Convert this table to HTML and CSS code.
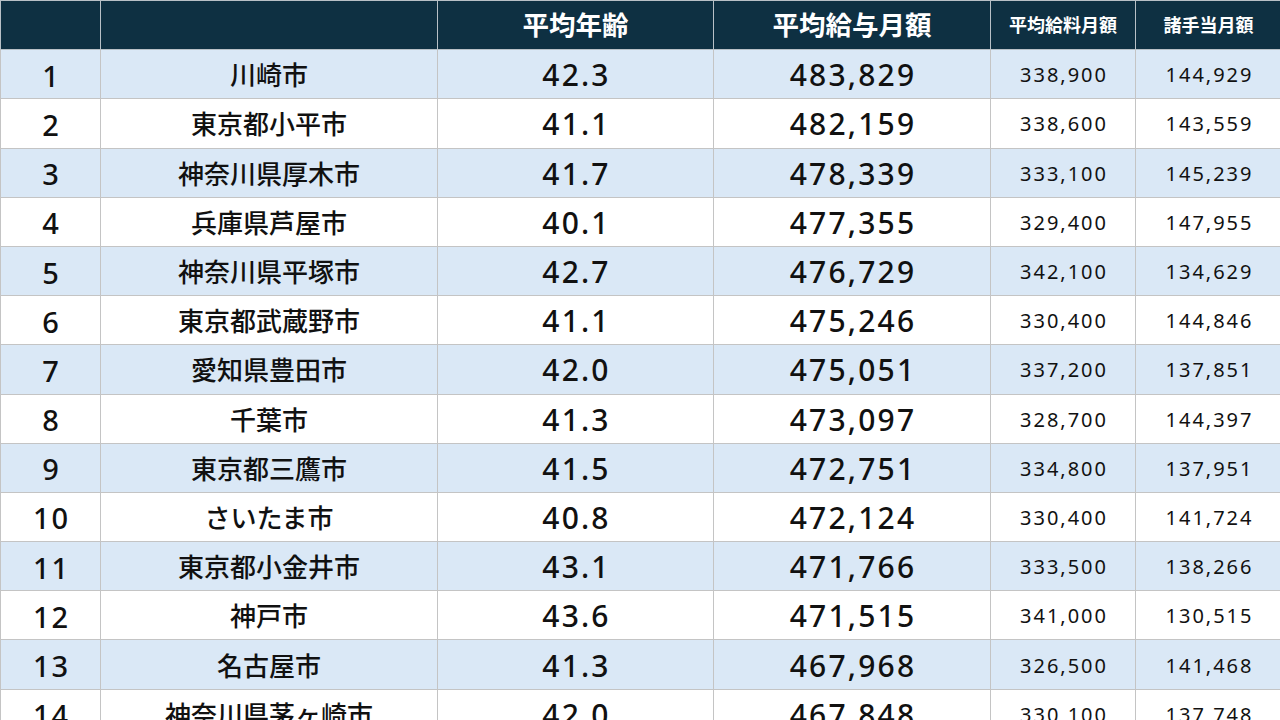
FILE: index.html
```html
<!DOCTYPE html>
<html lang="ja">
<head>
<meta charset="utf-8">
<link rel="stylesheet" href="styles.css">
</head>
<body>
<table class="tbl">
<colgroup>
<col class="c-rank"><col class="c-city"><col class="c-age"><col class="c-pay"><col class="c-sal"><col class="c-all">
</colgroup>
<thead>
<tr><th></th><th></th><th class="big">平均年齢</th><th class="big">平均給与月額</th><th class="small">平均給料月額</th><th class="small">諸手当月額</th></tr>
</thead>
<tbody>
<tr class="alt"><td class="rank">1</td><td class="city">川崎市</td><td class="num">42.3</td><td class="num">483,829</td><td class="sm">338,900</td><td class="sm">144,929</td></tr>
<tr><td class="rank">2</td><td class="city">東京都小平市</td><td class="num">41.1</td><td class="num">482,159</td><td class="sm">338,600</td><td class="sm">143,559</td></tr>
<tr class="alt"><td class="rank">3</td><td class="city">神奈川県厚木市</td><td class="num">41.7</td><td class="num">478,339</td><td class="sm">333,100</td><td class="sm">145,239</td></tr>
<tr><td class="rank">4</td><td class="city">兵庫県芦屋市</td><td class="num">40.1</td><td class="num">477,355</td><td class="sm">329,400</td><td class="sm">147,955</td></tr>
<tr class="alt"><td class="rank">5</td><td class="city">神奈川県平塚市</td><td class="num">42.7</td><td class="num">476,729</td><td class="sm">342,100</td><td class="sm">134,629</td></tr>
<tr><td class="rank">6</td><td class="city">東京都武蔵野市</td><td class="num">41.1</td><td class="num">475,246</td><td class="sm">330,400</td><td class="sm">144,846</td></tr>
<tr class="alt"><td class="rank">7</td><td class="city">愛知県豊田市</td><td class="num">42.0</td><td class="num">475,051</td><td class="sm">337,200</td><td class="sm">137,851</td></tr>
<tr><td class="rank">8</td><td class="city">千葉市</td><td class="num">41.3</td><td class="num">473,097</td><td class="sm">328,700</td><td class="sm">144,397</td></tr>
<tr class="alt"><td class="rank">9</td><td class="city">東京都三鷹市</td><td class="num">41.5</td><td class="num">472,751</td><td class="sm">334,800</td><td class="sm">137,951</td></tr>
<tr><td class="rank">10</td><td class="city">さいたま市</td><td class="num">40.8</td><td class="num">472,124</td><td class="sm">330,400</td><td class="sm">141,724</td></tr>
<tr class="alt"><td class="rank">11</td><td class="city">東京都小金井市</td><td class="num">43.1</td><td class="num">471,766</td><td class="sm">333,500</td><td class="sm">138,266</td></tr>
<tr><td class="rank">12</td><td class="city">神戸市</td><td class="num">43.6</td><td class="num">471,515</td><td class="sm">341,000</td><td class="sm">130,515</td></tr>
<tr class="alt"><td class="rank">13</td><td class="city">名古屋市</td><td class="num">41.3</td><td class="num">467,968</td><td class="sm">326,500</td><td class="sm">141,468</td></tr>
<tr><td class="rank">14</td><td class="city">神奈川県茅ヶ崎市</td><td class="num">42.0</td><td class="num">467,848</td><td class="sm">330,100</td><td class="sm">137,748</td></tr>
</tbody>
</table>
</body>
</html>
```
FILE: styles.css
```css
html, body {
  margin: 0;
  padding: 0;
  background: #ffffff;
  overflow: hidden;
}
body {
  font-family: "Noto Sans", "Noto Sans CJK JP", sans-serif;
  color: #111111;
}
.tbl {
  border-collapse: collapse;
  table-layout: fixed;
  width: 1281px;
}
.c-rank { width: 100px; }
.c-city { width: 337px; }
.c-age { width: 276px; }
.c-pay { width: 277px; }
.c-sal { width: 145px; }
.c-all { width: 146px; }
.tbl th, .tbl td {
  border: 1px solid #c4c4c4;
  height: 48.2px;
  padding: 0;
  text-align: center;
  vertical-align: middle;
  white-space: nowrap;
  line-height: 1;
}
.tbl td {
  height: 46.2px;
  padding-top: 2px;
}
.tbl thead th {
  background: #0e3042;
  color: #ffffff;
  border-color: #b8c0c6;
  font-weight: 700;
}
.tbl th.big {
  font-size: 26.5px;
}
.tbl th.small {
  font-size: 18px;
}
.tbl tr.alt td {
  background: #dae8f6;
}
.rank {
  font-size: 29px;
  font-weight: 500;
  letter-spacing: 2px;
  padding-left: 2px !important;
}
.city {
  font-size: 26px;
  font-weight: 500;
}
.num {
  font-size: 30px;
  font-weight: 500;
  letter-spacing: 2.2px;
  padding-left: 2px !important;
}
.sm {
  font-size: 20px;
  letter-spacing: 2px;
  padding-left: 2px !important;
}
```
